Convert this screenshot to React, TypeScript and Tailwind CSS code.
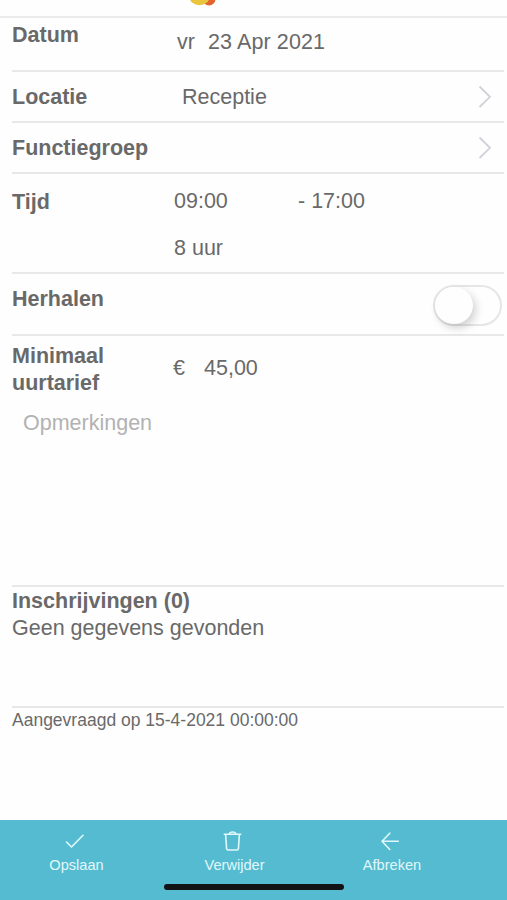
import type { ReactNode } from "react";

function Row({ label, className, children }: { label: string; className: string; children?: ReactNode }) {
  return (
    <div className={`ml-3 mr-[3px] flex items-start border-b-2 border-[#e8e8e8] ${className}`}>
      <div className="w-[162px] shrink-0 whitespace-nowrap font-bold">{label}</div>
      {children}
    </div>
  );
}

function Chevron() {
  return (
    <svg className="mr-3 mt-px ml-auto" width="14" height="23" viewBox="0 0 14 23" fill="none" stroke="#cfd2d8" strokeWidth="1.8">
      <path d="M1.5 1.5 12 11.8 1.5 22" />
    </svg>
  );
}

function Action({ label, className, children }: { label: string; className: string; children: ReactNode }) {
  return (
    <button className={`flex flex-col items-center ${className}`}>
      <svg width="24" height="24" viewBox="0 0 24 24" fill="none" stroke="#e0f8fa" strokeWidth="1.6" strokeLinecap="round" strokeLinejoin="round" className="mr-1">
        {children}
      </svg>
      <span className="mt-[2px] text-[14.6px] leading-5 text-[#e0f8fa]">{label}</span>
    </button>
  );
}

export default function App() {
  return (
    <div className="flex h-[900px] w-full flex-col overflow-hidden bg-[#fefefe] font-['Liberation_Sans',Arial,sans-serif] text-[21.5px] leading-[27px] text-[#696969]">
      <header className="h-[18px] shrink-0 border-b-2 border-[#ebebed]">
        <svg className="ml-[188px] block" width="30" height="8" viewBox="0 0 30 8">
          <ellipse cx="21" cy="-1" rx="6.5" ry="6.5" fill="#e4632f" />
          <ellipse cx="11.5" cy="-3" rx="10" ry="8.2" fill="#e8c53c" />
        </svg>
      </header>

      <main className="flex h-[802px] shrink-0 flex-col">
        <Row label="Datum" className="h-[54px] pt-1">
          <div className="mt-[7px] flex pl-[3px]">
            <span className="w-[31px]">vr</span>
            <span className="tracking-[0.1px]">23 Apr 2021</span>
          </div>
        </Row>
        <Row label="Locatie" className="h-[51px] pt-3">
          <span className="pl-2">Receptie</span>
          <Chevron />
        </Row>
        <Row label="Functiegroep" className="h-[51px] pt-3">
          <Chevron />
        </Row>
        <Row label="Tijd" className="h-[100px] pt-[15px]">
          <div className="-mt-px">
            <div className="flex">
              <span className="w-[124px]">09:00</span>
              <span>- 17:00</span>
            </div>
            <div className="mt-5">8 uur</div>
          </div>
        </Row>
        <Row label="Herhalen" className="h-[62px] pt-3">
          <div className="-mt-px ml-auto mr-[2px] h-[41px] w-[69px] rounded-full border-2 border-[#e6e6e6]">
            <div className="h-[37px] w-[38px] rounded-full bg-[#fefefe] shadow-[3px_4px_8px_rgba(0,0,0,0.18)]" />
          </div>
        </Row>
        <section className="ml-3 mr-[3px] h-[251px] border-b-2 border-[#e8e8e8] pt-[7px]">
          <div className="flex">
            <div className="w-[161px] font-bold">
              <div>Minimaal</div>
              <div>uurtarief</div>
            </div>
            <div className="mt-3 flex">
              <span className="w-[31px]">€</span>
              <span>45,00</span>
            </div>
          </div>
          <div className="mt-[13px] pl-[11px] text-[#b2b2b2]">Opmerkingen</div>
        </section>
        <section className="ml-3 mr-[3px] h-[121px] border-b-2 border-[#e8e8e8] pt-px">
          <div className="font-bold">Inschrijvingen (0)</div>
          <div>Geen gegevens gevonden</div>
        </section>
        <div className="ml-3 text-[17.5px] leading-6">Aangevraagd op 15-4-2021 00:00:00</div>
      </main>

      <footer className="flex h-20 shrink-0 flex-col bg-[#55bbd1]">
        <nav className="flex h-16 pt-[9px]">
          <Action label="Opslaan" className="w-[153px]">
            <path d="m3.5 13 5 5L20 6.3" />
          </Action>
          <Action label="Verwijder" className="w-[163px]">
            <path d="M3.3 5.2h16.4M4.6 5.4l1 14.2q.1 1.4 1.5 1.4h8.8q1.4 0 1.5-1.4l1-14.2M8.3 5c.6-2.6 6-2.6 6.6 0" />
          </Action>
          <Action label="Afbreken" className="w-[152px]">
            <path d="M20.3 12.3H4M11.8 4.2 4 12.3l7.8 8.2" />
          </Action>
        </nav>
        <div className="ml-[164px] h-1.5 w-[180px] rounded-full bg-[#111314]" />
      </footer>
    </div>
  );
}
